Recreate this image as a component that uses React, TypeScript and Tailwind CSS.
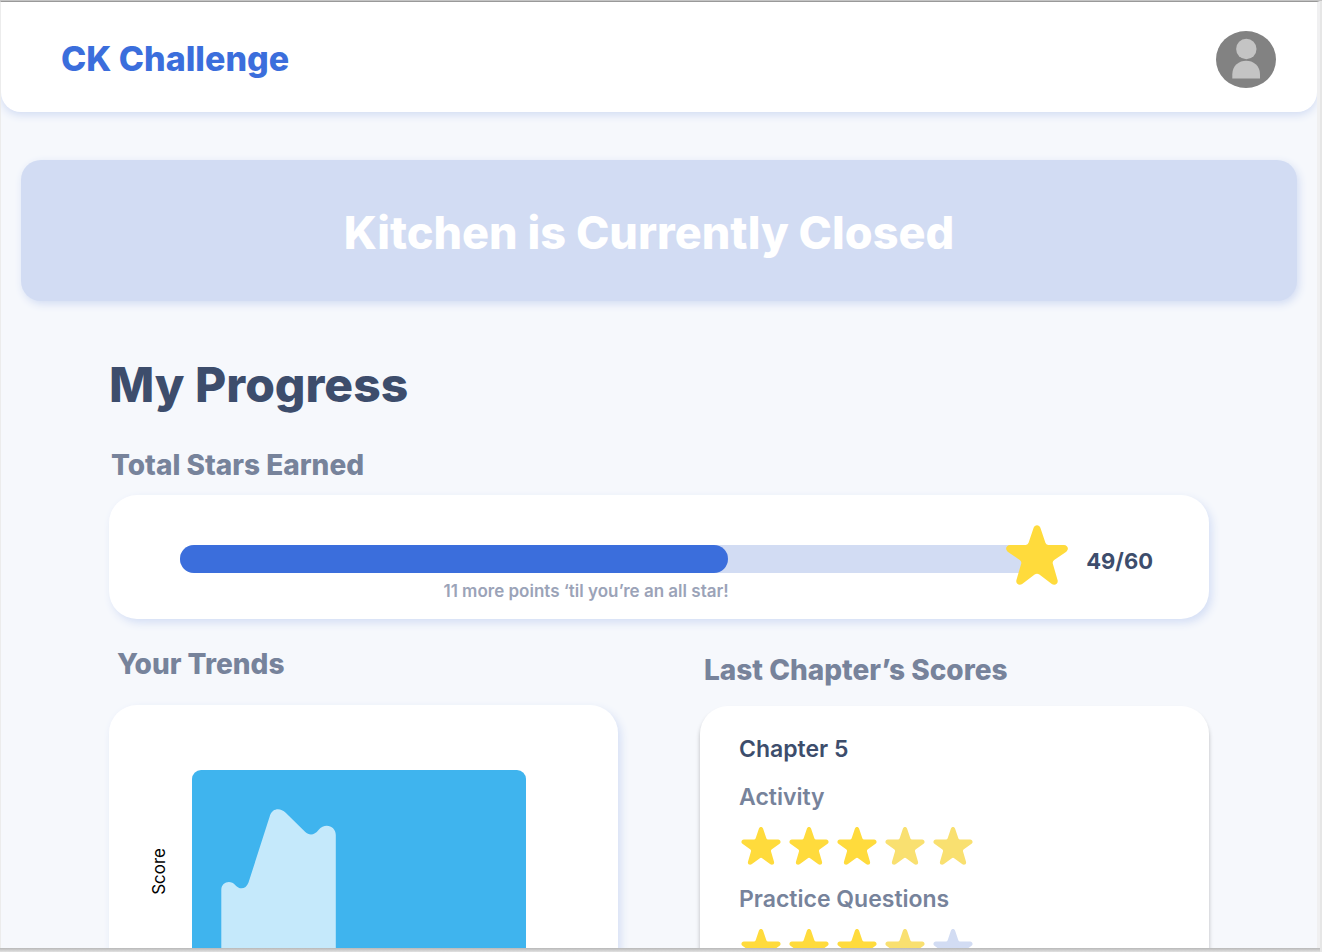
const STAR_PATH =
  "M82 8C85 -2 99 -2 102 8L117 53Q119 59 125 59L172 59C183 59 188 72 179 79L143 104Q137 108 139 115L153 163C156 174 145 181 136 175L99 147Q92 142 85 147L48 175C39 181 28 174 31 163L45 115Q47 108 41 104L5 79C-4 72 1 59 12 59L59 59Q65 59 67 53Z";

function Star({ className }: { className: string }) {
  return (
    <svg viewBox="0 0 184 178" className={className} aria-hidden="true">
      <path d={STAR_PATH} fill="currentColor" />
    </svg>
  );
}

type StarKind = "full" | "soft" | "empty";

const STAR_COLORS: Record<StarKind, string> = {
  full: "h-[38px] w-10 text-[#ffdb3c]",
  soft: "h-[38px] w-10 text-[#f9e070]",
  empty: "h-[38px] w-10 text-[#d2dcf3]",
};

function Rating({ label, stars }: { label: string; stars: StarKind[] }) {
  return (
    <div className="mb-[18px]">
      <h4 className="text-[23px] leading-8 font-semibold text-[#77839b]">{label}</h4>
      <div className="mt-3.5 flex gap-2 pl-0.5">
        {stars.map((kind, i) => (
          <Star key={i} className={STAR_COLORS[kind]} />
        ))}
      </div>
    </div>
  );
}

function Avatar() {
  return (
    <button type="button" aria-label="Account" className="shrink-0">
      <svg viewBox="0 0 60 57" className="h-[57px] w-[60px]">
        <ellipse cx="30" cy="28.5" rx="30" ry="28.5" fill="#828282" />
        <circle cx="30.3" cy="18" r="10.2" fill="#c4c4c4" />
        <path d="M16.300 47.500V43.500C16.300 25.300 44 25.300 44 43.500V47.500Z" fill="#c4c4c4" />
      </svg>
    </button>
  );
}

function TrendChart() {
  return (
    <svg viewBox="0 0 334 300" className="h-[300px] w-[334px]" aria-label="Score trend">
      <rect width="334" height="300" rx="9" fill="#3fb4ee" />
      <path
        d="M29.300 300V120C29.300 112 38.500 109.500 43.400 115.200C47.500 120 54 119.500 56.500 112.500L78 45.500C80.500 38 88.500 37.500 93.700 42.800L113.300 62C117 65.500 122.500 65.500 126.500 60C133 52 143.800 56 143.800 65V300Z"
        fill="#c5e9fb"
      />
    </svg>
  );
}

const CARD = "rounded-[28px] bg-white shadow-[3px_4px_8px_#d5dff5]";

export default function App() {
  return (
    <div className="flex h-screen flex-col border-t border-[#c4c4c4] bg-[#e6e6e6] pr-0.5 font-['Inter',sans-serif]">
      <div className="flex min-h-0 flex-1 flex-col border-t border-r-[3px] border-l border-t-[#999] border-r-[#f0f0f1] border-l-[#ececec] bg-[#f6f8fc]">
        <div className="min-h-0 flex-1 overflow-hidden">
          <header className="flex h-[110px] items-center justify-between rounded-b-[20px] bg-white pt-1 pr-[41px] pl-[60px] shadow-[0_3px_8px_#d2dcf3]">
            <h1 className="text-[34px] leading-10 font-extrabold text-[#3b6edc]">CK Challenge</h1>
            <Avatar />
          </header>

          <section className="mx-5 mt-12 flex h-[141px] items-center justify-center rounded-[20px] bg-[#d2dcf3] pt-1 pr-5 shadow-[2px_3px_8px_#d2dcf3]">
            <h2 className="text-[45px] leading-[56px] font-extrabold text-white">Kitchen is Currently Closed</h2>
          </section>

          <main className="mx-auto max-w-[1100px] pt-[54px]">
            <h2 className="text-[48px] leading-[60px] font-extrabold text-[#3d4d6c]">My Progress</h2>

            <h3 className="mt-8 pl-0.5 text-[28px] leading-9 font-extrabold text-[#77839b]">Total Stars Earned</h3>
            <section className={`${CARD} mt-3 flex h-[124px] items-start pt-[30px] pr-14 pl-[71px]`}>
              <div className="min-w-0 flex-1 pt-5">
                <div
                  role="progressbar"
                  aria-label="Total stars earned"
                  aria-valuemin={0}
                  aria-valuemax={60}
                  aria-valuenow={49}
                  className="h-7 rounded-l-full bg-[#d2dcf3]"
                >
                  <div className="h-full w-[64%] rounded-full bg-[#3b6edc]" />
                </div>
                <p className="mt-1.5 pr-11 text-center text-[17px] leading-6 font-semibold text-[#9ba3b8]">
                  11 more points ‘til you’re an all star!
                </p>
              </div>
              <Star className="relative -ml-[30px] h-[60px] w-[62px] shrink-0 text-[#ffdb3c]" />
              <span className="mt-5 ml-[18px] text-[22px] leading-8 font-bold text-[#3d4d6c]">49/60</span>
            </section>

            <div className="mt-[27px] grid grid-cols-2 items-start gap-[82px]">
              <section>
                <h3 className="pl-2 text-[28px] leading-9 font-extrabold text-[#77839b]">Your Trends</h3>
                <div className={`${CARD} mt-[23px] flex items-start pt-[65px] pb-16 pl-10`}>
                  <span className="mt-[78px] mr-[23px] rotate-180 text-[17px] leading-5 text-black [writing-mode:vertical-rl]">
                    Score
                  </span>
                  <TrendChart />
                </div>
              </section>

              <section className="pt-1.5">
                <h3 className="pl-1 text-[28px] leading-9 font-extrabold text-[#77839b]">Last Chapter’s Scores</h3>
                <div className="mt-[18px] rounded-[28px] bg-white px-[39px] pt-[27px] pb-10 shadow-[0_4px_4px_rgba(0,0,0,0.25)]">
                  <h4 className="mb-4 text-[23px] leading-8 font-semibold text-[#3d4d6c]">Chapter 5</h4>
                  <Rating label="Activity" stars={["full", "full", "full", "soft", "soft"]} />
                  <Rating label="Practice Questions" stars={["full", "full", "full", "soft", "empty"]} />
                </div>
              </section>
            </div>
          </main>
        </div>
      </div>
      <div className="h-1 shrink-0 bg-linear-to-b from-[#b8b8b8] to-[#e2e2e2]" />
    </div>
  );
}
